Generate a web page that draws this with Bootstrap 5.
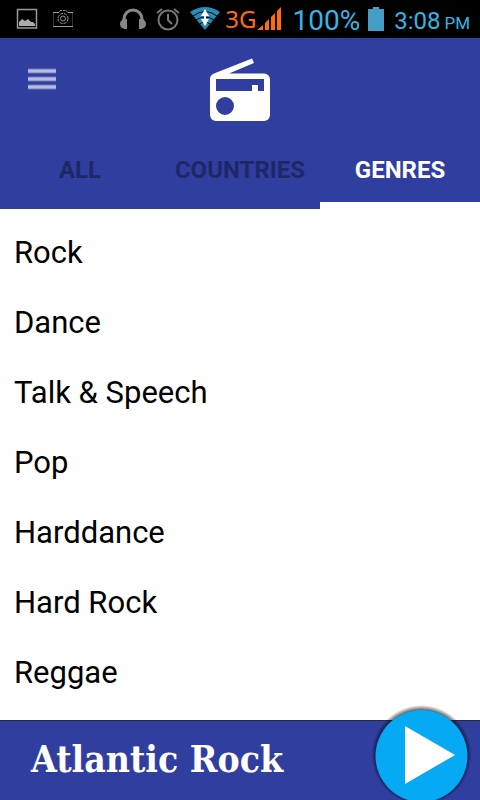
<!DOCTYPE html>
<html lang="en">
<head>
<meta charset="utf-8">
<meta name="viewport" content="width=device-width, initial-scale=1">
<title>Radio genres</title>
<link href="https://cdn.jsdelivr.net/npm/bootstrap@5.3.0/dist/css/bootstrap.min.css" rel="stylesheet">
<style>
body { font-family: Roboto, "Noto Sans", sans-serif; color: #000; background: #fff; }
svg { display: block; flex: none; }
.brand-fill { background: #303e9f; }
.status { height: 38px; padding: 0 10px 0 16px; background: #000; color: #35b5e5; line-height: 34px; }
.status-left { gap: 14px; }
.status-time { font-size: 24px; }
.status-level { font-size: 28px; }
.status-net { font-size: 24px; color: #ff6c0a; font-family: "Noto Sans", sans-serif; }
.status-half { font-size: 17px; }
.battery { margin-right: 10px; }
.topbar { height: 93px; padding: 0 28px; }
.side { flex: 1 1 0; }
.menu-btn { margin-bottom: 11px; }
.radio-logo { margin-top: 10px; }
.tabs .nav-link { height: 78px; padding: 0; border: 0; border-radius: 0; border-bottom: 7px solid transparent; font-size: 24px; font-weight: 700; line-height: 78px; color: #1f2866; background: transparent; }
.tabs .nav-link.active { color: #fff; border-bottom-color: #fff; }
.genres { padding-top: 9px; }
.genres a { height: 70px; padding: 0 14px; border: 0; font-size: 31px; color: #000; background: #fff; }
.player { height: 80px; padding: 0 0 2px 31px; border-top: 1px solid #272c38; color: #fff; }
.player-title { font: 700 37px/1 "DejaVu Serif Condensed", "DejaVu Serif", serif; }
.play-btn { right: 8px; top: -17px; }
</style>
<script src="https://cdn.jsdelivr.net/npm/bootstrap@5.3.0/dist/js/bootstrap.bundle.min.js"></script>
</head>
<body>
<div class="d-flex flex-column min-vh-100 overflow-hidden">
  <div class="status d-flex align-items-center justify-content-between text-nowrap">
    <div class="status-left d-flex align-items-center">
      <svg width="22" height="22" viewBox="0 0 22 22"><path d="M1.500 1.500h19v18.500h-19z" fill="none" stroke="#999" stroke-width="1.500"/><path d="M3 18v-4l3-3 3 2 3-2 3 3h2l2 2v2z" fill="#aaa"/></svg>
      <svg width="22" height="20" viewBox="0 0 22 20" fill="none" stroke="#999"><path d="M1 3.500h5M16 3.500h5M1 17.500h20"/><path d="M1.500 4v13M20.500 4v13" stroke="#333"/><circle cx="11" cy="9.500" r="5" stroke-dasharray="3 1"/><circle cx="11" cy="9.500" r="2.500"/><path d="M6 4l2-2.500h6l2 2.500" stroke-dasharray="2 1"/></svg>
    </div>
    <div class="d-flex align-items-center">
      <svg class="me-2" width="28" height="22" viewBox="0 0 28 22"><path d="M5 14V11a9 9 0 0 1 18 0v3" fill="none" stroke="#888" stroke-width="3"/><path d="M8 11v10H6a5 5 0 0 1 0-10zM20 11v10h2a5 5 0 0 0 0-10z" fill="#888"/></svg>
      <svg class="me-2" width="26" height="24" viewBox="0 0 26 24" fill="none" stroke="#777" stroke-width="2"><circle cx="13" cy="13" r="9.500"/><path d="M13 7v6l4 4M2 6l5-4M24 6l-5-4"/></svg>
      <svg class="me-1" width="32" height="26" viewBox="0 0 32 26"><path d="M1 6q15-10 30 0L16 24z" fill="#268bb5"/><path d="M4 10q12-9 24 0M7 14q9-6 18 0M11 18q5-4 10 0" fill="none" stroke="#000"/><path d="M16 3l4 7h-8zM16 20l4-7h-8z" fill="#fff"/><path d="M15 8h2v6h-2z" fill="#fff"/></svg>
      <span class="status-net">3G</span>
      <svg class="me-2" width="28" height="26" viewBox="0 0 28 26" fill="#ff6c0a"><path d="M1 24l6-5v5zM9 17l4-4v11H9zM15 11l4-4v17h-4zM21 5l4-4v23h-4z"/></svg>
      <span class="status-level pt-1 me-2">100%</span>
      <svg class="battery" width="16" height="24" viewBox="0 0 16 24"><path d="M0 2h5V0h6v2h5v22H0z" fill="#439dc4"/></svg>
      <span class="status-time pt-1 me-1">3:08</span><span class="status-half pt-2">PM</span>
    </div>
  </div>

  <header class="brand-fill">
    <div class="topbar d-flex align-items-center">
      <div class="side"><button class="menu-btn btn p-0 border-0" type="button" aria-label="Menu">
        <svg width="28" height="22" viewBox="0 0 28 22"><path d="M0 3h28M0 11h28M0 19h28" stroke="#6f7abb" stroke-width="5"/><path d="M0 3h28M0 11h28M0 19h28" stroke="#b8bddd" stroke-width="3"/></svg>
      </button></div>
      <svg class="radio-logo" width="60" height="64" viewBox="0 0 60 64" role="img" aria-label="Radio"><path fill="#fff" fill-rule="evenodd" d="M4 15.500L42 .5l2 4.500-25 10.500h35a6 6 0 0 1 6 6V57a6 6 0 0 1-6 6H6a6 6 0 0 1-6-6V21q0-4 4-5.500zM6 21v12h36v-6h6v6h6V21zM15 39a9 9 0 1 0 0 18 9 9 0 0 0 0-18z"/></svg>
      <div class="side"></div>
    </div>
    <div class="tabs nav nav-fill row g-0" role="tablist">
      <button class="nav-link col-4" type="button" role="tab">ALL</button>
      <button class="nav-link col-4" type="button" role="tab">COUNTRIES</button>
      <button class="nav-link col-4 active" type="button" role="tab" aria-selected="true">GENRES</button>
    </div>
  </header>

  <main class="genres list-group list-group-flush flex-grow-1">
    <a href="#" class="list-group-item d-flex align-items-center">Rock</a>
    <a href="#" class="list-group-item d-flex align-items-center">Dance</a>
    <a href="#" class="list-group-item d-flex align-items-center">Talk &amp; Speech</a>
    <a href="#" class="list-group-item d-flex align-items-center">Pop</a>
    <a href="#" class="list-group-item d-flex align-items-center">Harddance</a>
    <a href="#" class="list-group-item d-flex align-items-center">Hard Rock</a>
    <a href="#" class="list-group-item d-flex align-items-center">Reggae</a>
  </main>

  <footer class="player brand-fill position-relative d-flex align-items-center">
    <span class="player-title">Atlantic Rock</span>
    <button class="play-btn btn p-0 border-0 position-absolute" type="button" aria-label="Play">
      <svg width="102" height="104" viewBox="0 0 102 104">
        <defs><radialGradient id="rim"><stop offset=".9" stop-color="#000" stop-opacity=".6"/><stop offset="1" stop-color="#000" stop-opacity="0"/></radialGradient></defs>
        <circle cx="51.500" cy="51" r="50" fill="url(#rim)"/><circle cx="51.500" cy="52" r="46" fill="#05a9f4"/><path d="M35 22v58l50-29z" fill="#fff"/>
      </svg>
    </button>
  </footer>
</div>
</body>
</html>
